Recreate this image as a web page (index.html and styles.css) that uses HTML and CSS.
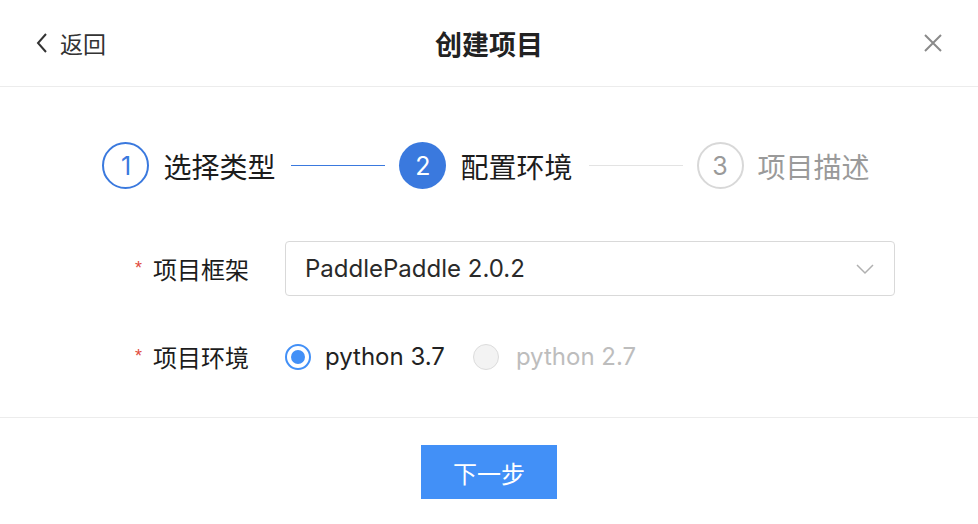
FILE: index.html
```html
<!DOCTYPE html>
<html lang="zh">
<head>
<meta charset="utf-8">
<link rel="stylesheet" href="styles.css">
</head>
<body>
<div class="dialog">
  <header class="header">
    <a class="back">
      <svg class="back-icon" width="14" height="22" viewBox="0 0 14 22"><path d="M11 2 L3 11 L11 20" fill="none" stroke="#333" stroke-width="2"/></svg>
      <span>返回</span>
    </a>
    <h1 class="title">创建项目</h1>
    <svg class="close" width="20" height="20" viewBox="0 0 20 20"><path d="M2 2 L18 18 M18 2 L2 18" stroke="#8a8a8a" stroke-width="2"/></svg>
  </header>
  <main class="main">
    <div class="steps">
      <div class="step done"><span class="num">1</span><span class="label">选择类型</span></div>
      <div class="line active"></div>
      <div class="step current"><span class="num">2</span><span class="label">配置环境</span></div>
      <div class="line"></div>
      <div class="step todo"><span class="num">3</span><span class="label">项目描述</span></div>
    </div>
    <div class="form">
      <div class="row">
        <label class="flabel"><span class="star">*</span>项目框架</label>
        <div class="select">
          <span>PaddlePaddle 2.0.2</span>
          <svg width="18" height="12" viewBox="0 0 18 12"><path d="M1 2 L9 10 L17 2" fill="none" stroke="#b0b0b0" stroke-width="1.5"/></svg>
        </div>
      </div>
      <div class="row radio-row">
        <label class="flabel"><span class="star">*</span>项目环境</label>
        <div class="radios">
          <span class="radio checked"><span class="dot"></span></span><span class="rtext">python 3.7</span>
          <span class="radio disabled"></span><span class="rtext dis">python 2.7</span>
        </div>
      </div>
    </div>
  </main>
  <footer class="footer">
    <button class="next">下一步</button>
  </footer>
</div>
</body>
</html>
```
FILE: styles.css
```css
html, body {
  margin: 0;
  padding: 0;
  background: #fff;
}
body {
  font-family: "Inter", "Noto Sans CJK SC", sans-serif;
  color: #222;
}
.dialog {
  width: 978px;
  height: 524px;
  display: flex;
  flex-direction: column;
}
.header {
  height: 86px;
  border-bottom: 1.5px solid #ececec;
  display: flex;
  align-items: center;
  padding: 0 35px 0 35px;
  position: relative;
}
.back {
  display: flex;
  align-items: center;
  gap: 11px;
  font-size: 23px;
  color: #333;
  font-family: "Noto Sans CJK SC", sans-serif;
}
.title {
  position: absolute;
  left: 0;
  right: 0;
  text-align: center;
  margin: 0;
  font-size: 27px;
  font-weight: 600;
  color: #222;
  font-family: "Noto Sans CJK SC", sans-serif;
  pointer-events: none;
}
.close {
  margin-left: auto;
}
.main {
  flex: 1;
  border-bottom: 1.5px solid #ececec;
}
.steps {
  display: flex;
  align-items: center;
  justify-content: center;
  margin-top: 55px;
  padding-right: 6px;
}
.step {
  display: flex;
  align-items: center;
  gap: 14px;
}
.num {
  box-sizing: border-box;
  width: 47px;
  height: 47px;
  border-radius: 50%;
  display: flex;
  align-items: center;
  justify-content: center;
  font-size: 25px;
  font-family: "Inter", sans-serif;
}
.label {
  font-size: 28px;
  font-family: "Noto Sans CJK SC", sans-serif;
  color: #1c1c1c;
}
.done .num {
  border: 2px solid #3a79de;
  color: #3a79de;
}
.current .num {
  background: #3a79de;
  color: #fff;
}
.todo .num {
  border: 2px solid #d8d8d8;
  color: #9a9a9a;
}
.todo .label {
  color: #9a9a9a;
}
.line {
  width: 94px;
  height: 1.5px;
  background: #e3e3e3;
  margin: 0 14px 0 16px;
}
.line.active {
  background: #3a79de;
}
.form {
  margin-top: 52px;
  padding-left: 135px;
}
.row {
  display: flex;
  align-items: center;
}
.flabel {
  width: 150px;
  font-size: 24px;
  font-family: "Noto Sans CJK SC", sans-serif;
  color: #1c1c1c;
  display: flex;
  align-items: center;
}
.star {
  color: #e04a3c;
  font-size: 18px;
  width: 18px;
  font-family: "Liberation Sans", sans-serif;
}
.select {
  box-sizing: border-box;
  width: 610px;
  height: 55px;
  border: 1.5px solid #d9d9d9;
  border-radius: 4px;
  display: flex;
  align-items: center;
  justify-content: space-between;
  padding: 0 20px 0 19px;
  font-size: 24px;
  color: #2a2a2a;
}
.radio-row {
  margin-top: 43px;
}
.radios {
  display: flex;
  align-items: center;
  font-size: 24px;
}
.radio {
  box-sizing: border-box;
  width: 26px;
  height: 26px;
  border-radius: 50%;
  display: flex;
  align-items: center;
  justify-content: center;
  margin-right: 14px;
}
.radio.checked {
  border: 2px solid #4290f7;
}
.radio .dot {
  width: 14px;
  height: 14px;
  border-radius: 50%;
  background: #4290f7;
}
.radio.disabled {
  border: 1.5px solid #dcdcdc;
  background: #f3f3f3;
  margin-left: 28px;
  margin-right: 17px;
}
.rtext {
  color: #222;
}
.rtext.dis {
  color: #bdbdbd;
}
.footer {
  height: 106px;
  display: flex;
  justify-content: center;
  padding-top: 27px;
  box-sizing: border-box;
}
.next {
  width: 136px;
  height: 54px;
  border: none;
  background: #4290f7;
  color: #fff;
  font-size: 24px;
  font-family: "Noto Sans CJK SC", sans-serif;
  padding: 0;
}
```
